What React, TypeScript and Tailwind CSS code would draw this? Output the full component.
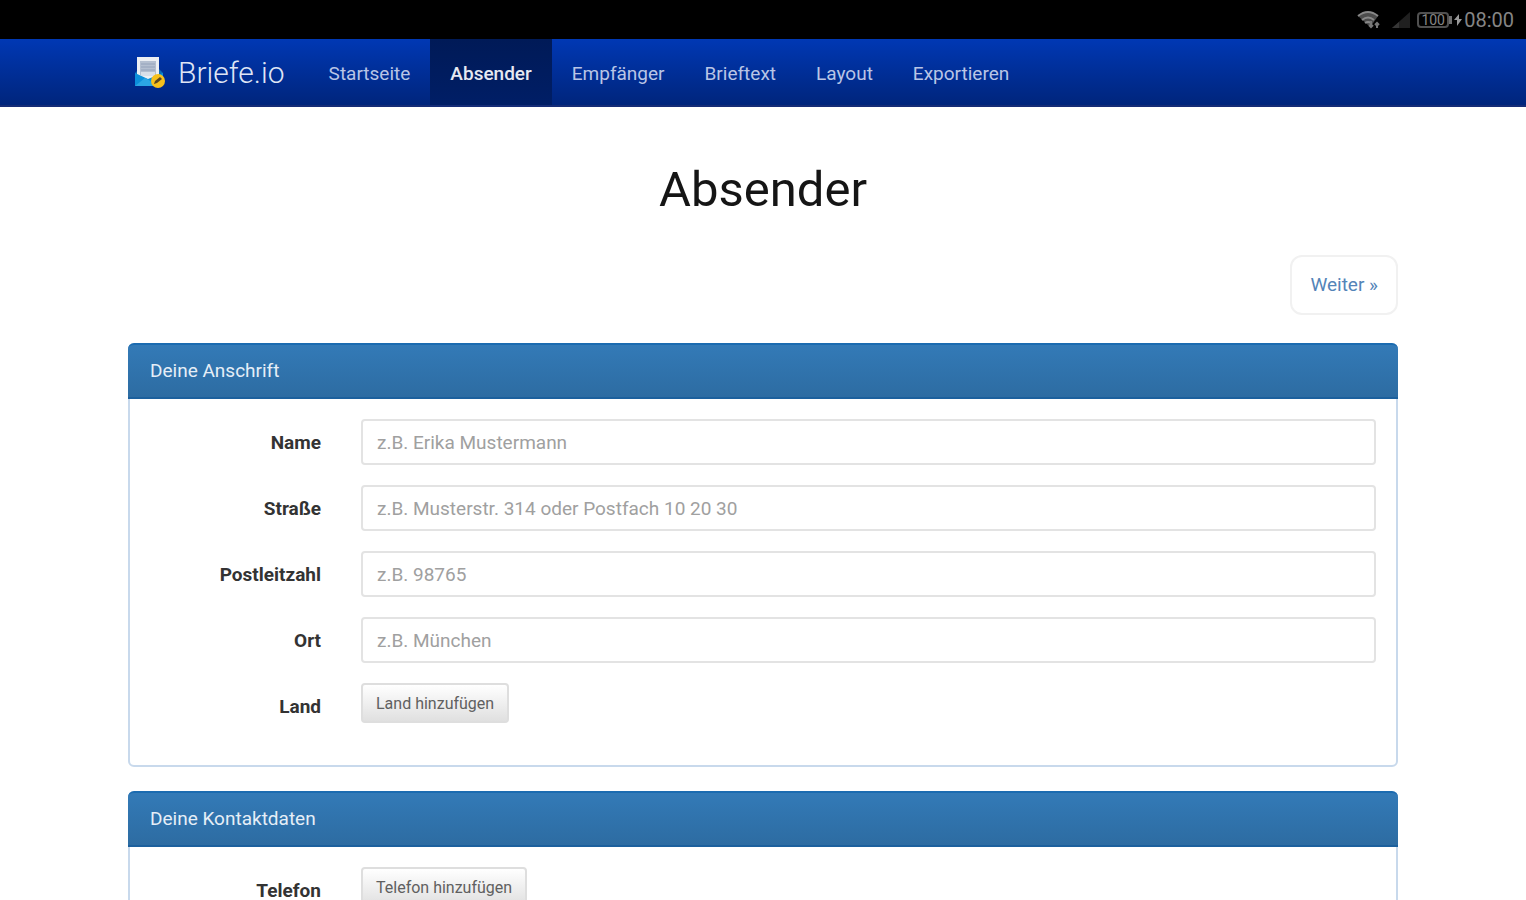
import type { ReactNode } from 'react';

const navItems = ['Startseite', 'Absender', 'Empfänger', 'Brieftext', 'Layout', 'Exportieren'];

const fields = [
  { id: 'name', label: 'Name', placeholder: 'z.B. Erika Mustermann' },
  { id: 'street', label: 'Straße', placeholder: 'z.B. Musterstr. 314 oder Postfach 10 20 30' },
  { id: 'zip', label: 'Postleitzahl', placeholder: 'z.B. 98765' },
  { id: 'city', label: 'Ort', placeholder: 'z.B. München' },
];

function StatusBar() {
  return (
    <div className="flex h-[39px] items-center justify-end bg-black pr-3 text-[#858585]">
      <svg className="mr-2.5 h-5 w-6" viewBox="0 0 24 20" fill="none" aria-hidden="true">
        <path d="M1 6Q11 -2 21 6L14 16L11 15Z" fill="#4c4c4c" />
        <path d="M1 6Q11 -2 21 6M5 10Q11 5 17 10M8 13Q11 11 14 13" stroke="#888" strokeWidth="2" />
        <path d="M14 11V17M12 15l2 2 2-2M20 18v-5M18 15l2-2 2 2" stroke="#777" strokeWidth="2" />
      </svg>
      <svg className="mr-1.5 h-5 w-5" viewBox="0 0 20 20" aria-hidden="true">
        <path d="M1 18L19 2V18Z" fill="#202020" />
        <path d="M1 18L8 12V18Z" fill="#363636" />
      </svg>
      <div className="flex items-center">
        <span className="flex h-4 w-8 items-center justify-center rounded-sm border-2 border-[#505050] text-sm leading-none">
          100
        </span>
        <span className="h-2 w-[3px] bg-[#707070]" />
      </div>
      <svg className="mx-0.5 h-3 w-2" viewBox="0 0 8 12" aria-hidden="true">
        <path d="M5 0L0 6H3V12L8 5H5Z" fill="#999" />
      </svg>
      <span className="text-xl leading-none">08:00</span>
    </div>
  );
}

function Logo() {
  return (
    <svg className="h-9 w-8 shrink-0" viewBox="0 0 32 36" aria-hidden="true">
      <path d="M1 18L5 14H25L29 18V31H1Z" fill="#0a6fb8" />
      <path d="M3 2H25V24H3Z" fill="#eceff3" />
      <path d="M6 6H22V20H6Z" fill="#b4bfd0" />
      <path d="M7 9H21M7 12H21M7 15H21" stroke="#94a2ba" strokeWidth="1" />
      <path d="M7 17H21V21H7Z" fill="#d8dfe9" />
      <path d="M1 18L14 24L29 18V31H1Z" fill="#0b8fdb" />
      <path d="M1 31L11 23L15 25L22 31Z" fill="#2ba5e4" />
      <circle cx="24" cy="26" r="7" fill="#f6c01c" />
      <path d="M20 29L21 26L26 22L28 24L23 28Z" fill="#594621" />
    </svg>
  );
}

function Panel({ title, children }: { title: string; children: ReactNode }) {
  return (
    <section className="mb-6 rounded-md border-2 border-[#c8d9ec] bg-white">
      <h2 className="-mx-0.5 -mt-0.5 flex h-14 items-center rounded-t-md border-y-2 border-t-[#1b6bb0] border-b-[#1c609d] bg-linear-to-b from-[#337ab7] to-[#2d6ca2] px-[22px] text-[19px] leading-7 text-[#e5eef7]">
        {title}
      </h2>
      <div className="pt-5 pb-4">{children}</div>
    </section>
  );
}

function Row({ label, htmlFor, children }: { label: string; htmlFor: string; children: ReactNode }) {
  return (
    <div className="mb-5 flex min-h-[46px] items-start">
      <label htmlFor={htmlFor} className="w-1/6 pt-2.5 pr-5 text-right text-[19px] leading-7 font-bold text-[#333]">
        {label}
      </label>
      <div className="w-5/6 px-5">{children}</div>
    </div>
  );
}

function AddButton({ id, children }: { id: string; children: ReactNode }) {
  return (
    <button
      id={id}
      type="button"
      className="h-10 rounded-sm border-2 border-[#dedede] bg-linear-to-b from-white to-[#e0e0e0] px-[13px] pt-0.5 text-base leading-none text-[#606060]"
    >
      {children}
    </button>
  );
}

export default function App() {
  return (
    <div className="h-screen overflow-hidden bg-white font-[Roboto,sans-serif]">
      <StatusBar />
      <header className="border-b-2 border-[#152c77] bg-linear-to-b from-[#0038b4] to-[#00257c]">
        <div className="mx-auto flex max-w-[1310px] items-stretch px-5">
          <a
            href="#start"
            className="mr-6 flex items-center gap-3 pt-0.5 pl-1.5 text-[30px] leading-none font-light text-[#dfe5f5]"
          >
            <Logo />
            Briefe.io
          </a>
          <nav className="flex">
            {navItems.map((item) => (
              <a
                key={item}
                href={'#' + item.toLowerCase()}
                aria-current={item === 'Absender' ? 'page' : undefined}
                className={
                  item === 'Absender'
                    ? 'flex h-[66px] items-center bg-linear-to-b from-[#001a57] to-[#001e66] px-5 pt-1 text-[19px] leading-7 font-medium text-[#e6e9f2]'
                    : 'flex h-[66px] items-center px-5 pt-1 text-[19px] leading-7 text-[#b9c5e6]'
                }
              >
                {item}
              </a>
            ))}
          </nav>
        </div>
      </header>
      <main className="mx-auto max-w-[1310px] px-5">
        <h1 className="pt-[53px] pb-[35px] text-center text-[49px] leading-[60px] font-normal text-[#151515]">Absender</h1>
        <div className="mb-7 flex justify-end">
          <a
            href="#empfänger"
            className="rounded-xl border-2 border-[#f1f1f1] px-[18px] py-3.5 text-[19px] leading-7 text-[#5384b8]"
          >
            Weiter »
          </a>
        </div>
        <Panel title="Deine Anschrift">
          {fields.map((f) => (
            <Row key={f.id} label={f.label} htmlFor={f.id}>
              <input
                id={f.id}
                type="text"
                placeholder={f.placeholder}
                className="block h-[46px] w-full rounded-sm border-2 border-[#e3e3e3] bg-white px-3.5 text-[19px] text-[#555] placeholder:text-[#a0a0a0]"
              />
            </Row>
          ))}
          <Row label="Land" htmlFor="country">
            <AddButton id="country">Land hinzufügen</AddButton>
          </Row>
        </Panel>
        <Panel title="Deine Kontaktdaten">
          <Row label="Telefon" htmlFor="phone">
            <AddButton id="phone">Telefon hinzufügen</AddButton>
          </Row>
        </Panel>
      </main>
    </div>
  );
}
